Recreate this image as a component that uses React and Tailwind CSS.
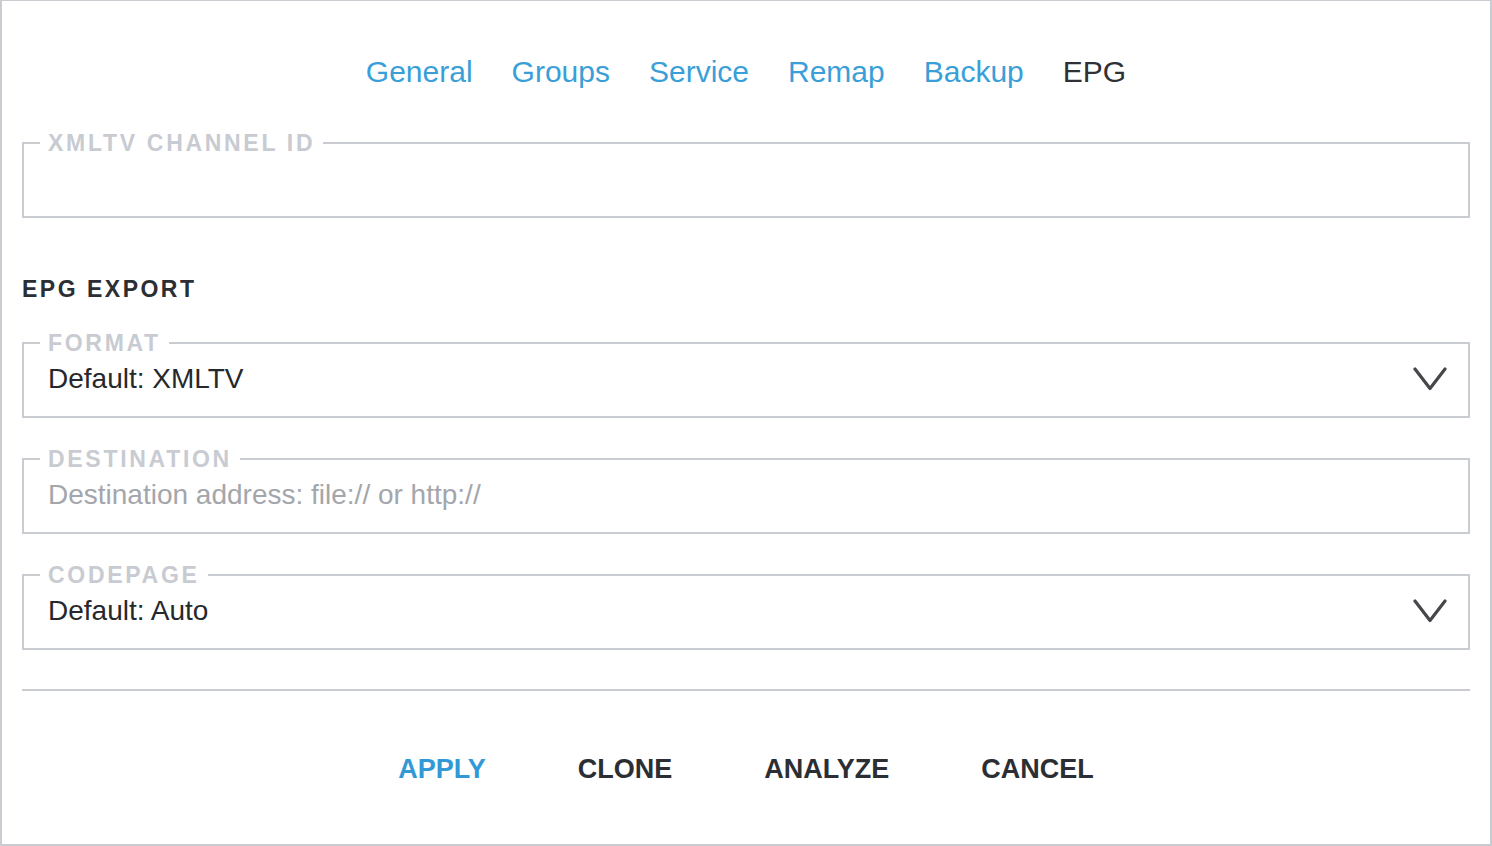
import React from 'react'

const tabs = ['General', 'Groups', 'Service', 'Remap', 'Backup', 'EPG']

function Chevron() {
  return (
    <svg width="34" height="24" viewBox="0 0 34 24" fill="none" className="shrink-0">
      <polyline points="2,2 17,21.5 32,2" stroke="#46474b" strokeWidth="3.2" strokeLinejoin="round" strokeLinecap="round" />
    </svg>
  )
}

function Field({ label, children, select }) {
  return (
    <fieldset className="border-2 border-[#c9ccd1]">
      <legend className="ml-4 px-2 text-[23px] leading-[22px] font-bold tracking-[2.7px] text-[#c8cbd1]">
        {label}
      </legend>
      <div className="h-[62px] flex items-center justify-between pl-6 pr-[21px] pb-3 text-[28px] leading-[32px]">
        {children}
        {select && <Chevron />}
      </div>
    </fieldset>
  )
}

export default function App() {
  return (
    <div className="h-[846px] flex flex-col bg-white border-t border-x-2 border-b-2 border-[#c9ccd1] px-5 font-['Liberation_Sans',Arial,sans-serif]">
      {/* Tabs */}
      <nav className="flex justify-center gap-[39px] pt-[53px] text-[30px] leading-[36px]">
        {tabs.map((t) => (
          <span key={t} className={t === 'EPG' ? 'text-[#2f3135]' : 'text-[#3a9fd8]'}>
            {t}
          </span>
        ))}
      </nav>

      <div className="mt-[42px]">
        <Field label="XMLTV CHANNEL ID">
          <span />
        </Field>
      </div>

      <h2 className="mt-[60px] text-[23px] leading-[22px] font-bold tracking-[2.5px] text-[#2b2e33]">EPG EXPORT</h2>

      <div className="mt-[32px] flex flex-col gap-[30px]">
        <Field label="FORMAT" select>
          <span className="text-[#26282c]">Default: XMLTV</span>
        </Field>
        <Field label="DESTINATION">
          <span className="text-[#a3a6ab]">Destination address: file:// or http://</span>
        </Field>
        <Field label="CODEPAGE" select>
          <span className="text-[#26282c]">Default: Auto</span>
        </Field>
      </div>

      <div className="mt-[39px] h-[2px] bg-[#c9ccd1]" />

      {/* Actions */}
      <div className="flex-1 flex items-center justify-center gap-[92px] pt-[3px] text-[27px] leading-[32px] font-bold">
        <button className="text-[#3399d6]">APPLY</button>
        <button className="text-[#2b2e33]">CLONE</button>
        <button className="text-[#2b2e33]">ANALYZE</button>
        <button className="text-[#2b2e33]">CANCEL</button>
      </div>
    </div>
  )
}
